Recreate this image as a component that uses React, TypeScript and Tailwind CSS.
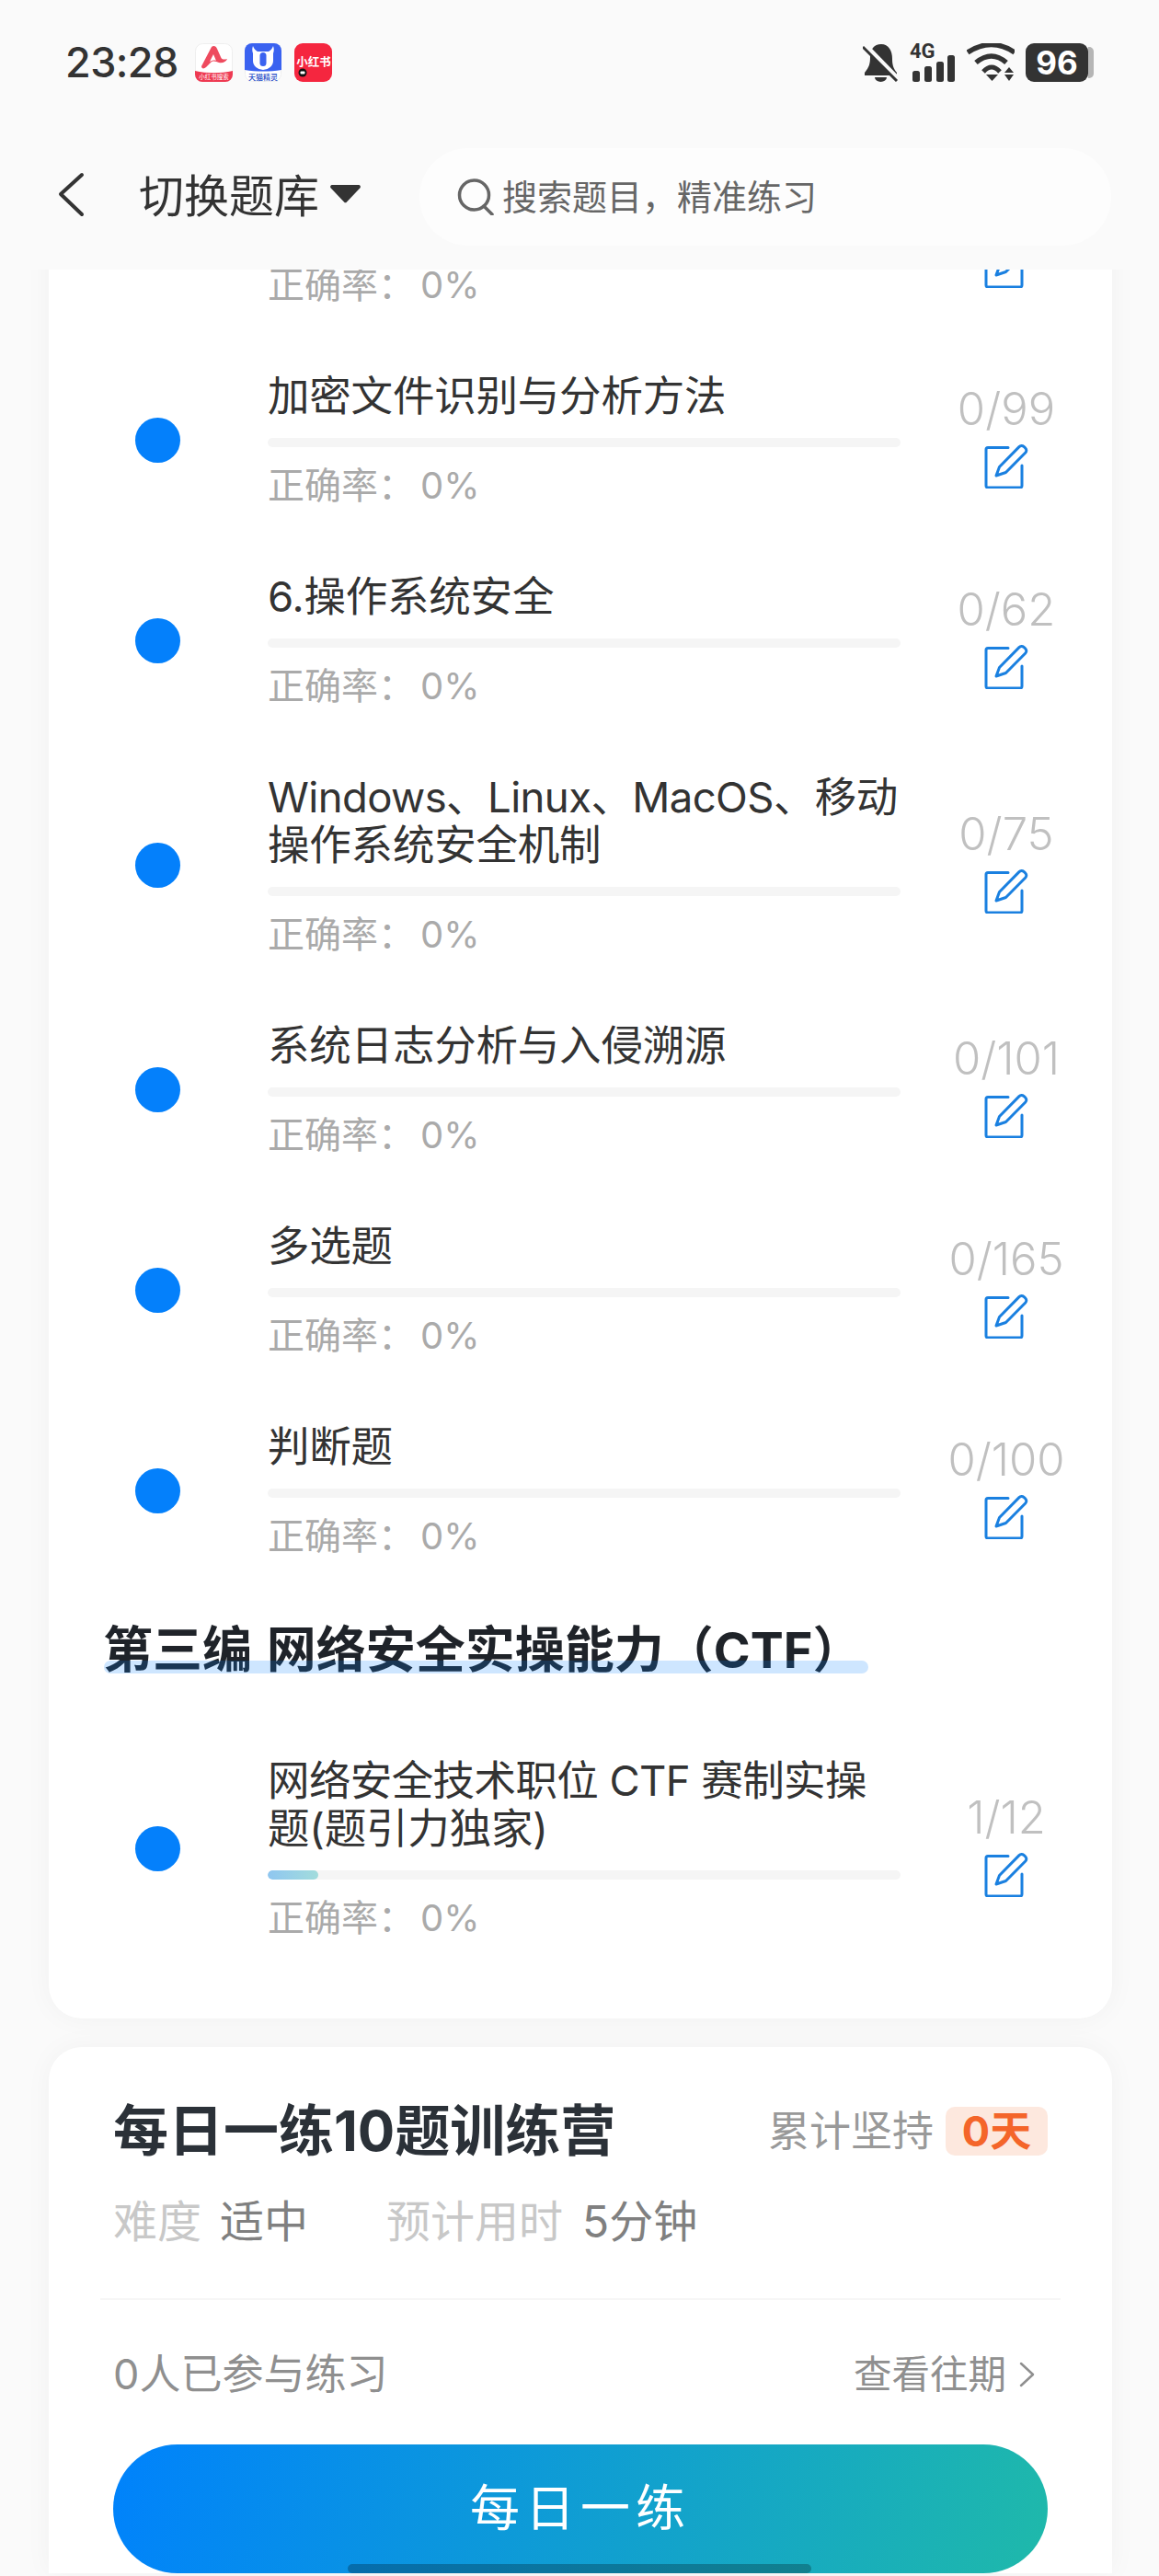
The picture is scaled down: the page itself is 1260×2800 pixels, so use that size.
import React from 'react';

const sans = "font-['Inter','Noto_Sans_CJK_SC',sans-serif]";

type Chapter = { title: string[]; count: string; fill: number; tight?: boolean };

// first row is scrolled under the header, only its last line shows
const chapters: Chapter[] = [
  { title: [''], count: '', fill: 0 },
  { title: ['加密文件识别与分析方法'], count: '0/99', fill: 0 },
  { title: ['6.操作系统安全'], count: '0/62', fill: 0 },
  { title: ['Windows、Linux、MacOS、移动', '操作系统安全机制'], count: '0/75', fill: 0, tight: true },
  { title: ['系统日志分析与入侵溯源'], count: '0/101', fill: 0 },
  { title: ['多选题'], count: '0/165', fill: 0 },
  { title: ['判断题'], count: '0/100', fill: 0 },
];

const ctfChapter: Chapter = { title: ['网络安全技术职位 CTF 赛制实操', '题(题引力独家)'], count: '1/12', fill: 8, tight: true };

const EditIcon = () => (
  <svg width="49" height="49" viewBox="0 0 49 49" fill="none" stroke="#1a80e0" strokeWidth="3" strokeLinejoin="round" strokeLinecap="round">
    <path d="M26 4.5H4a2 2 0 0 0-2 2V46a2 2 0 0 0 2 2h35a2 2 0 0 0 2-2V24" />
    <path d="M13 35l3.5-9.5L38 3.6a3.6 3.6 0 0 1 5-.2l1.6 1.4a3.6 3.6 0 0 1 .2 5.2L23.5 31.5z" />
  </svg>
);

const ChapterRow = ({ chapter }: { chapter: Chapter }) => (
  <div className="flex items-center pl-[94px]">
    <div className="w-[49px] h-[49px] rounded-full bg-[#0480fb] shrink-0" />
    <div className="w-[688px] ml-[95px] pt-[36px] pb-[33px]">
      {chapter.title.map((line, idx) => (
        <div
          key={idx}
          className={`min-h-[52px] text-[45.5px] leading-[52px] font-normal text-[#333] whitespace-nowrap ${chapter.tight && idx === 0 ? 'tracking-[-0.6px]' : 'tracking-[-0.2px]'}`}
        >
          {line}
        </div>
      ))}
      <div className="h-[10px] mt-[19px] rounded-full bg-[#f5f5f5] overflow-hidden">
        <div
          className="h-full rounded-full bg-gradient-to-r from-[#8fc6f0] to-[#a2dcdc]"
          style={{ width: `${chapter.fill}%` }}
        />
      </div>
      <div className="text-[40px] leading-[52px] mt-[16px] font-normal text-[#aaa]">
        正确率：<span className="ml-[6px]">0%</span>
      </div>
    </div>
    <div className="w-[200px] ml-[15px] pb-[7px] flex flex-col items-center">
      <div className="h-[52px] mb-[11px] text-[49px] leading-[52px] font-light text-[#c0c0c0]">{chapter.count}</div>
      <EditIcon />
    </div>
  </div>
);

const StatusBar = () => (
  <div className="h-[42px] mt-[47px] pl-[71px] pr-[70px] flex items-center justify-between">
    <div className="flex items-center">
      <span className="text-[45px] leading-[42px] font-medium text-[#333] w-[141px] whitespace-nowrap tracking-[-0.6px]">23:28</span>
      <div className="flex gap-[13px]">
        <svg width="41" height="42" viewBox="0 0 41 42">
          <rect x="0.5" y="0.5" width="40" height="41" rx="8" fill="#fff" stroke="#eee" />
          <path d="M0 30c13 3 28 3 41 0v4a8 8 0 0 1-8 8H8a8 8 0 0 1-8-8z" fill="#ee3a52" />
          <path d="M18 4L7 25c0 3 3 3 5 1l5-5c3-3 6-1 9 0 4 1 8-1 9-4-3 1-6 1-7-2L24 6c-1-3-4-4-6-2z" fill="#ee4a5e" />
          <path d="M20 12l-4 8c2-1 5-2 7-1z" fill="#fff" />
          <text x="20.5" y="39" textAnchor="middle" fontSize="6.5" fill="#fff" fontFamily="'Noto Sans CJK SC',sans-serif">小红书搜索</text>
        </svg>
        <svg width="40" height="42" viewBox="0 0 40 42">
          <rect x="0.5" y="0.5" width="39" height="41" rx="8" fill="#fff" stroke="#eee" />
          <path d="M0 8a8 8 0 0 1 8-8h24a8 8 0 0 1 8 8v21c-13 2-27 2-40 0z" fill="#3a62f0" />
          <path d="M9 3c1 3 3 5 5 6h12c2-1 4-3 5-6 1 3 1 5 0 8v8a11 10 0 0 1-22 0v-8c-1-3-1-5 0-8z" fill="#fff" />
          <rect x="16.5" y="10" width="7" height="15" rx="3.5" fill="#3a62f0" />
          <text x="20" y="39.5" textAnchor="middle" fontSize="8" fontWeight="500" fill="#2a4fc8" fontFamily="'Noto Sans CJK SC',sans-serif">天猫精灵</text>
        </svg>
        <svg width="41" height="42" viewBox="0 0 41 42" className="ml-[1px]">
          <rect width="41" height="42" rx="9" fill="#f5263f" />
          <text x="21" y="25" textAnchor="middle" fontSize="12.5" fontWeight="700" fill="#fff" fontFamily="'Noto Sans CJK SC',sans-serif">小红书</text>
          <circle cx="9" cy="32" r="4.5" fill="#111" />
          <rect x="6.5" y="30.5" width="5" height="3" rx="1" fill="#fff" />
        </svg>
      </div>
    </div>
    <div className="flex items-center h-[42px] mr-[7px]">
      <svg width="39" height="42" viewBox="0 0 39 42" className="mr-[12px]">
        <path d="M20 1c-8 0-12 6-12 14 0 7-1 11-6 17v3h35v-3c-4-5-5-9-5-15 0-9-4-16-12-16z" fill="#333" />
        <path d="M13 37h13a6.500 5 0 0 1-13 0z" fill="#333" />
        <path d="M3 3l36 37" stroke="#fafafa" strokeWidth="6" />
        <path d="M0 4l37 37" stroke="#333" strokeWidth="3" />
      </svg>
      <svg width="50" height="42" viewBox="0 0 50 42" className="mr-[12px]">
        <text x="0" y="16" fontSize="22" fontWeight="700" fill="#333" fontFamily="Roboto,sans-serif">4G</text>
        <rect x="3" y="30" width="8" height="12" rx="2.5" fill="#333" />
        <rect x="16" y="25" width="8" height="17" rx="2.5" fill="#333" />
        <rect x="29" y="20" width="8" height="22" rx="2.5" fill="#333" />
        <rect x="41" y="13" width="8" height="29" rx="2.5" fill="#333" />
      </svg>
      <svg width="52" height="42" viewBox="0 0 52 42" fill="none" className="mr-[12px]">
        <path d="M1 10Q27 -7 52 10" stroke="#333" strokeWidth="5.5" />
        <path d="M10 21Q27 7 43 21" stroke="#333" strokeWidth="5.5" />
        <path d="M18 31Q27 21 36 31" stroke="#333" strokeWidth="5" />
        <path d="M21 34h13l-6.500 7z" fill="#333" />
        <path d="M46 26l5 6H41z" fill="#333" />
        <path d="M41 34h10l-5 7z" fill="#333" />
      </svg>
      <div className="relative w-[68px] h-[42px] rounded-[9px] bg-[#333] flex items-center justify-center text-[35px] leading-[42px] font-bold text-white">
        96
        <div className="absolute -right-[6px] top-[4px] w-[6px] h-[34px] rounded-r-[5px] bg-[#b5b5b5]" />
      </div>
    </div>
  </div>
);

export default function App() {
  return (
    <div className={`relative h-[2800px] w-[1260px] overflow-hidden bg-[#fafafa] flex flex-col ${sans}`}>
      <header className="h-[293px] shrink-0 bg-[#fafafa]">
        <StatusBar />
        <div className="h-[106px] mt-[72px] flex items-center">
          <svg width="30" height="49" viewBox="0 0 30 49" fill="none" stroke="#333" strokeWidth="4" strokeLinecap="round" strokeLinejoin="round" className="ml-[62px] -mt-[6px]">
            <path d="M27 3L4 24l23 22" />
          </svg>
          <span className="ml-[59px] w-[198px] text-[49px] leading-[52px] font-normal text-[#333] whitespace-nowrap">切换题库</span>
          <svg width="33" height="20" viewBox="0 0 33 20" className="ml-[10px] -mt-[6px]">
            <path d="M2 0h29a2 2 0 0 1 1.500 3.200L18 18.500a2 2 0 0 1-3 0L.5 3.200A2 2 0 0 1 2 0z" fill="#333" />
          </svg>
          <div className="ml-[64px] w-[752px] h-[106px] rounded-full bg-[#fdfdfd] flex items-center pl-[41px]">
            <svg width="40" height="40" viewBox="0 0 40 40" fill="none" stroke="#666" strokeWidth="3.5" strokeLinecap="round">
              <circle cx="18.500" cy="18" r="16" />
              <path d="M29 30l9 9" />
            </svg>
            <span className="ml-[9px] text-[38px] leading-[52px] font-normal text-[#666] whitespace-nowrap">搜索题目，精准练习</span>
          </div>
        </div>
      </header>

      <main className="flex-1 min-h-0 overflow-hidden px-[53px]">
        <section className="-mt-[142px] w-[1156px] bg-white rounded-b-[36px] pb-[50px] shadow-[0_0_30px_rgba(0,0,0,0.04)]">
          {chapters.map((chapter, idx) => (
            <ChapterRow key={idx} chapter={chapter} />
          ))}
          <div className="relative h-[145px] pl-[59px] pt-[39px]">
            <h2 className="text-[54px] leading-[52px] font-bold text-[#1f2329] whitespace-nowrap [word-spacing:3px]">第三编 网络安全实操能力（CTF）</h2>
            <div className="absolute left-[60px] top-[76px] w-[831px] h-[14px] rounded-full bg-[#0a84ff]/20" />
          </div>
          <ChapterRow chapter={ctfChapter} />
        </section>

        <section className="mt-[31px] w-[1156px] bg-white rounded-t-[36px] px-[70px] pt-[65px] shadow-[0_0_30px_rgba(0,0,0,0.04)]">
          <div className="h-[53px] flex items-center justify-between">
            <h3 className="text-[60px] leading-[53px] font-bold text-[#2b3138] whitespace-nowrap">每日一练10题训练营</h3>
            <div className="flex items-center">
              <span className="text-[45px] leading-[53px] font-normal text-[#999] whitespace-nowrap">累计坚持</span>
              <span className="ml-[13px] w-[111px] h-[53px] rounded-[10px] bg-[#fde8de] flex items-center justify-center text-[45px] leading-[53px] font-bold text-[#f4652a] whitespace-nowrap">0天</span>
            </div>
          </div>
          <div className="mt-[46px] h-[52px] flex items-center text-[48px] leading-[52px] font-normal whitespace-nowrap">
            <span className="text-[#c8c8c8]">难度</span>
            <span className="ml-[20px] text-[#808080]">适中</span>
            <span className="ml-[85px] text-[#c8c8c8]">预计用时</span>
            <span className="ml-[21px] text-[#808080]">5分钟</span>
          </div>
          <div className="-mx-[14px] mt-[57px] h-[2px] bg-[#f6f6f6]" />
          <div className="mt-[55px] h-[52px] flex items-center justify-between font-normal whitespace-nowrap">
            <span className="text-[45px] leading-[52px] text-[#8f8f8f]">0人已参与练习</span>
            <span className="flex items-center text-[41.5px] leading-[52px] text-[#8f8f8f]">
              查看往期
              <svg width="19" height="30" viewBox="0 0 19 30" fill="none" stroke="#8f8f8f" strokeWidth="2.500" strokeLinecap="round" strokeLinejoin="round" className="ml-[13px] mr-[13px]">
                <path d="M3 3l13 12L3 27" />
              </svg>
            </span>
          </div>
          <button className="mt-[50px] w-full h-[140px] rounded-full bg-[linear-gradient(105deg,#0082fc,#1fb9aa)] text-white text-[54px] leading-[60px] tracking-[6px] font-normal">
            每日一练
          </button>
        </section>
      </main>

      <div className="absolute left-[378px] bottom-[3px] w-[504px] h-[10px] rounded-full bg-black/25" />
    </div>
  );
}
